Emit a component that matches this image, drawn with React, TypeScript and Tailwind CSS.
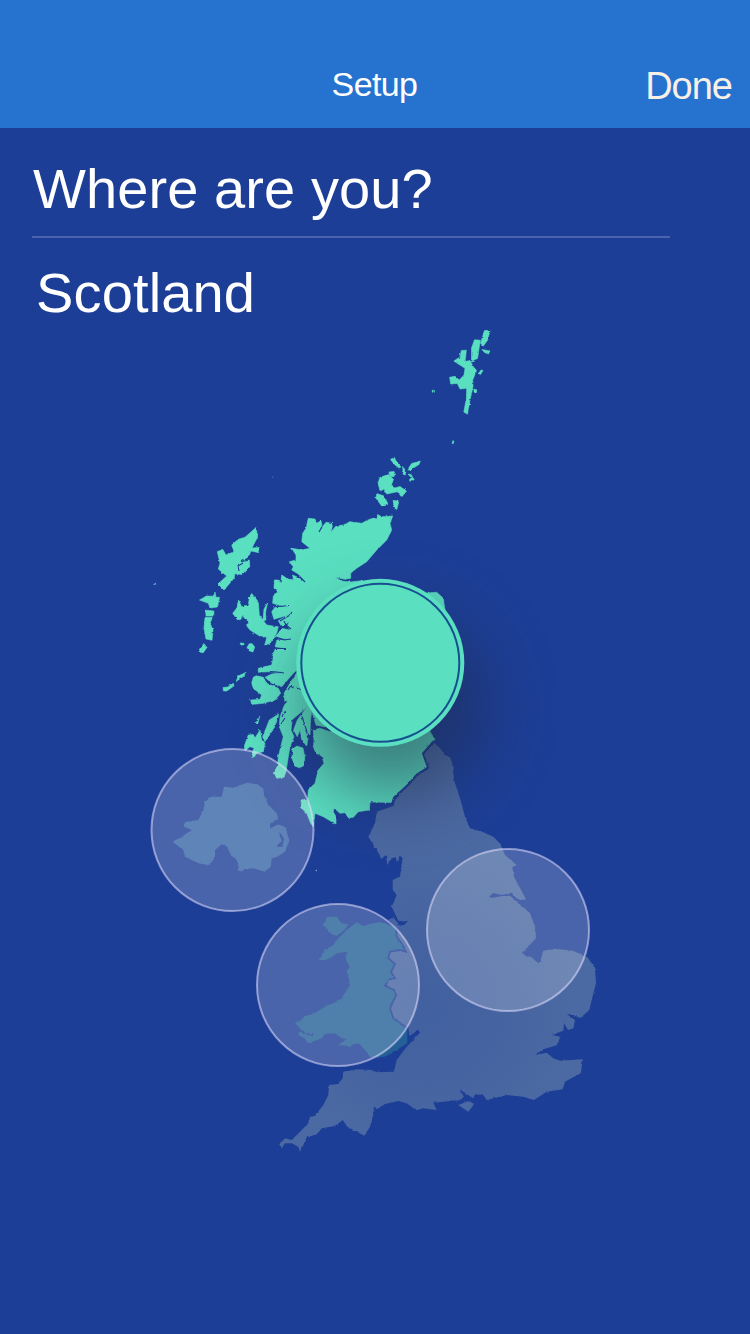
import React from "react";

const mainland =
  "M308.3 518.3L315 519L316.7 523.3L321 520.7L322 525L318.5 531.7L326 522.3L331.7 523.3L332.3 526.7L330.7 532.3L336 526L343.3 525L350 521.7L361.7 523.3L368 520L373.3 518.3L377 519L377.7 514.5L381.7 516.7L392.7 516L390 523.3L391.7 530L386.7 540L376.7 550L366.7 561.7L356.7 568.3L350.7 573.3L350.7 578.3L345 579.3L335 577.3L341.7 581L350 582L361.7 580.7L380 600L430 592.7L436.7 592.3L443.3 598.3L445 610L440 700L430 731.7L435 739.3L422.7 752.7L427.7 766.7L416.7 773.3L408.3 783.3L393.3 796.7L391.7 802.7L370 802.3L369.3 810L358.3 811.7L353.3 817.3L348.3 817.7L345 812.7L340 813.3L334 808.3L333.3 811.7L336 816.7L336 824L330 820.7L323.3 816.7L315 813.3L313.3 826.7L310.7 823.3L306.7 813.3L301.7 808.3L301 800L305 799.3L307.3 803.3L308.3 790L315 783.3L318.3 770L324 763.3L321.7 756L316 753.3L313.3 746.7L314 741L313.3 730L320 728.3L330 731.7L345 720L330 690L300 680L296 670.7L293.3 673.3L281.7 686.7L271.7 683.3L265 677.3L271.7 674L283.3 672.7L268.3 671.7L258.3 672.3L258.3 668.3L271.7 665L273.3 656.7L271.7 658.3L275 649.3L285 648.3L275 646.7L277 640L290 640L275 636.7L278.3 633.3L281.7 628.3L290 630L287.3 626L289.3 621.7L281.7 626.7L278.3 620.7L288.3 615L274 619.3L271.7 611.7L275 607.3L284 606.7L272.7 603.3L273.3 595L278.3 591.7L274 588.3L274.3 580L278.3 580L280.7 583.3L281.7 575L286.7 578.3L293.3 580L292.5 575L296.7 576.7L305 581.7L298.3 574L291.7 570L293.3 566.7L289.3 561.7L296 560L296 555L291.7 548.3L301.7 550L310 548.3L301.7 541.7L302.7 533.3L306 528.3Z";

const argyll =
  "M297.3 672L290 683.3L284 693.3L285 703.3L280 716.7L279.3 726.7L283.3 736.7L278.3 756.7L277.7 765L274.3 773.3L276.7 778.3L284 777.3L286 771.7L288.3 756.7L290 746.7L294 736.7L291 730L292.3 719.6L306.7 707.5L297.3 720L293.6 730L297.3 736.7L300 730L301.7 740L306.7 746L308 738L304.5 729L310 735L310.5 721L311.7 711L316 725L325 727L340 715L340 660Z";

const lochs =
  "M241 561.5L248 560.5M243 563L238 566L239 571M276 606.8L289 605.5M280 621L290 615L292 612M281 628L286 625L291 629M286 625L284 621M276 637L284 640L291 639M276 648.5L286 648.5M292 573L299 576L305 582M293.5 688L290.5 686L288 690M297 688L305 691L314 690.5M282 716L285.5 711M281 724L285 718M283 705L287 701M302 716L307 732M270 671.5L277 672L284 673M322 527L319 532";

const islands = [
  "M292.5 749L297 746L303 748L304.8 757L304.5 765L300 768L294.5 766L292 758Z",
  "M253.5 677L256.7 675.7L263.3 677.3L266.7 683.3L278.3 688.3L280.7 693.3L275 700L263.3 703.3L251.7 704.5L250.7 700L260 699.3L261.7 695L253.3 688.3L251.7 682.7Z",
  "M246 672.3L244 676L236 681.5L238.3 676Z",
  "M223 687.5L228 687L233.3 683.3L234 686L226.7 691L223.5 691Z",
  "M278.8 714L276.7 721.7L271.7 731.7L265 741.7L262.6 736.7L266.7 726.7L269.3 720Z",
  "M260 730L261.7 740L265 743.3L263.3 751.7L256.7 753.3L253.3 758L252 753L254 748L250 746.7L245 750.5L244.3 746L248.3 735L253.3 734.5L255 738Z",
  "M259.8 716L258 723L255 722.5Z",
  "M251.7 593.5L258.3 601.7L259.3 615L266.7 625L278.3 626.7L276.7 633.3L270 643.3L264.7 646L266.7 636.7L261.7 637.3L250 630L246 625L249 623L243.3 615L238.3 621L232.7 613.3L236.7 608.3L238.5 600L241.7 606.7L248.3 605L249.5 597Z",
  "M267.6 603L265.5 612L266 620L262.8 621L264 609Z",
  "M249 644L252 643.5L254.7 647L253 652L249.5 651L247 647.5Z",
  "M240 643L244 643.3L244 645L241 645Z",
  "M256 527.5L257.7 536.7L252 548L259.3 547.5L258 552.5L251 551L249.3 555L240 561.7L249.3 560L249.8 566.7L241.7 574.5L235 573.7L234 578.3L224 590L218 584L226.7 576L218.3 569L220 563.3L217.3 551.7L222.7 549.3L226 555L234 551.7L231.7 545L238.3 539.3L245 537.3Z",
  "M199.5 600L206.7 596L214 596.3L215 592L216 597.3L219.6 597.3L217.3 607L210 608L208.3 603.3Z",
  "M205.7 610.2L214 611L213.7 616L206 616Z",
  "M205 617.3L212.7 617.3L210 623L213 630L212 640.3L206 639L204 628.3Z",
  "M203.8 643.5L207 647.3L203.3 652.7L199 652Z",
  "M153.8 583.3L155.6 583.3L155.6 584.3L154.2 584.3Z",
  "M380 477.3L388.3 474.6L393.5 479.3L391 486L395 488L400 486.5L406.5 491L401.7 497L397.3 491.7L386.7 494L384 489L380 490.5L378 483.3Z",
  "M376.7 493.5L384 496L387.8 503.5L381.7 506L376 498.3Z",
  "M389 472L394 471.5L395.5 474.5L392 477L389.5 475Z",
  "M393 500.5L399 501L396.8 509.5L394.5 508Z",
  "M390.5 459.5L394.3 457.3L396.3 461.7L401 467L399 468L394 464Z",
  "M407.3 470L411.7 463.5L420.3 461L419 464.5L415 467L410 470Z",
  "M402.5 466.5L404.6 470L405.5 475L402 474L403 470Z",
  "M408 474L411 474.5L414.3 480L409.5 480L411 477.5Z",
  "M484.5 330.5L490 330.5L487.7 340L483.3 346L480.5 343.3Z",
  "M482 349.5L489.8 351L488.5 354L484.5 352.5Z",
  "M474.5 339.8L480.3 340.2L477.5 358.5L471.5 361L471.5 348Z",
  "M461.3 350.5L466.4 350.2L465 361.7L470 360.4L473.3 366.7L476.5 370.5L472.7 380L473 386.7L470 400L467.5 414.3L463.8 412L466.4 398.3L466.7 388.3L460 389L457.3 383.5L450.7 384L449.6 377.3L455 376.3L459.3 380L464 375L465 368.3L458.3 364L453.8 361L460 357Z",
  "M478.5 373.5L481 370L483 370.5L480.5 374.5Z",
  "M474 389L477 390L476 393.5L474 392Z",
  "M432.2 390.3L434.4 390.3L434.4 392.3L432.4 392.3Z",
  "M453 440.5L454 441.5L453 444L452 443.5Z",
];

const england =
  "M434 742.7L440 748.3L445 755L450 757.3L452.7 765L454 780L460 798.3L465 816.7L470 828.3L480 830.7L493.3 836.7L500 843.3L505 855L516.7 865L512.3 867.3L514 876.7L526 899.3L520 900L515 896.7L511.7 892.7L501.7 895L493.3 893L489 896.7L493.3 897.7L502 895.9L510 895.7L518.3 903.3L530 913.3L535 926.7L536 938.3L526.7 948.3L522 952.7L526.7 956.7L530 956L538.3 963.3L540.7 960L543.3 950.7L553.3 948.7L573.3 950.7L588.3 958.3L595 968.3L596 983.3L591.7 1000L589.3 1010L580 1018.3L573.3 1015L566.7 1014L575 1020L573.3 1028.3L568 1030L564 1023.3L563.3 1030.7L551.7 1035L560 1036.7L557.7 1045L543.3 1049.3L535 1055L546.7 1052.7L553.3 1058.3L560 1060.7L582.7 1059.3L580.7 1073.3L565 1081.7L562.7 1089.3L546.7 1091.7L534 1100L523.3 1096.7L506.7 1095L486.7 1100L483.3 1095L475 1094.3L473.3 1098.3L459.3 1089.3L464 1096.7L460 1100L433.3 1102.7L436.7 1110L423.3 1108.3L416 1110L406.7 1103.3L398.3 1101L385 1104L376.7 1109.3L374 1106L373.3 1115L370 1126.7L364.3 1135.7L356.7 1131.7L347.3 1126.7L342.7 1120L335 1126L321.7 1128.3L316.7 1134.3L306.7 1137.3L303.3 1145L300 1151.7L298.3 1146.7L291.7 1143.3L285 1143.3L281.7 1148.3L279 1145L285 1138.3L291.7 1140L301.7 1130L308.3 1123.3L310 1116.7L315 1116L323.3 1105L328.3 1095L329 1085L338.3 1084L342.7 1078.3L343.3 1071.7L356.7 1069.3L371.7 1070L376.7 1072.3L394 1071.7L396.7 1060L406.7 1046.7L420 1032.7L418 1030L409.5 1036L408.3 1027L406 1026.7L393.3 1018.3L390 1008.3L396 995L394 990L385 985.7L390 979L395 978.3L391 972L395 964L388.3 958.3L390 951.7L400 950L406 951.7L401.7 943.3L396.7 936.7L396 928.3L388.3 920L393.3 917.3L400 925.7L404 925L408.3 920.7L404 921.5L398.3 920.7L391.7 906.7L396.7 895L392.7 890L392.7 880L400 876.7L402.7 856.7L399.3 856L398.3 861.7L394.3 857L391.7 858.3L387.3 865L386 855L381.7 858.3L376.7 850L368.3 836.7L375 823.3L376.7 811.7L393.3 806L395 800L410 783.3L416.7 776L428.3 769L423.3 754Z";

const wight = "M458.3 1105L468.3 1101L474.3 1104L468.3 1111.7Z";

const walesBorder =
  "M396 928.3L396.7 936.7L401.7 943.3L406 951.7L400 950L390 951.7L388.3 958.3L395 964L391 972L395 978.3L390 979L385 985.7L394 990L396 995L390 1008.3L393.3 1018.3L407.3 1028";

const wales =
  walesBorder +
  "L407.3 1043.3L396.7 1050L385 1056.7L370 1057.3L365 1050L358.3 1042.7L350 1046L338.3 1045L346.7 1039L341.7 1038.3L335 1033.3L325 1034L321.7 1038.3L308.3 1043.3L305 1038.7L296.7 1034L300 1031.7L313 1036.5L313.5 1031L312 1035L301 1030L298 1026L295 1023.3L300 1020.7L305 1016L313.3 1014L325 1006.7L340 1000L348.3 988.3L350 978.3L346.7 971.7L350 966.7L346 960L346.7 951.7L336.7 953.3L328.3 959.3L318.3 960.7L325 950L333.3 945L338.3 938.3L346.7 930L356.7 922.3L363.3 926L373.3 923.3L381.7 921.7Z";

const anglesey =
  "M327.3 916.7L336.7 916.7L341.7 923.3L348.3 924.3L345 929.3L336.7 936L330 933.3L326.7 928.3L322.7 925Z";

const northernIreland =
  "M224 786.7L233.3 787.7L246.7 782.7L256.7 784.3L263.3 788.3L264 795L268.3 805L276.7 813.3L278 819L273 821.3L270 824L270 828.5L278.3 824.3L285 826.7L289.3 840L285 851.7L277.3 856.7L271.7 858.3L270.7 866.7L265 871.7L253.3 868.3L239.3 871L236.7 860L230.7 855L227.3 846.7L221.7 844.3L215 850L215 858.3L208.3 865L198.3 863.3L185 856.7L183.3 850L172.7 841.7L181.7 836.7L191.7 830L184 826.7L185 822.3L198.3 820L203.3 810L205 801.7L211.7 796.7L221.7 796.7ZM279.3 831.7L280.7 841L277.3 846.7L282.7 846.7L284 838.3Z";

const regions = [
  { name: "Northern Ireland", cx: 232.5, cy: 830 },
  { name: "Wales", cx: 338, cy: 985 },
  { name: "England", cx: 508, cy: 930 },
];

function RegionMap() {
  return (
    <svg viewBox="0 320 750 1014" className="block h-[1014px] w-full" role="img">
      <defs>
        <filter id="coast" x="0" y="320" width="750" height="1014" filterUnits="userSpaceOnUse" colorInterpolationFilters="sRGB">
          <feTurbulence type="fractalNoise" baseFrequency="0.25" numOctaves="2" seed="4" />
          <feDisplacementMap in="SourceGraphic" scale="2.4" xChannelSelector="R" yChannelSelector="G" />
        </filter>
        <filter id="soft" x="-100%" y="-100%" width="300%" height="300%" colorInterpolationFilters="sRGB">
          <feGaussianBlur stdDeviation="34" />
        </filter>
        <radialGradient id="shade" gradientUnits="userSpaceOnUse" cx="425" cy="1005" r="150">
          <stop offset="0" stopColor="#1d3e96" stopOpacity="0.2" />
          <stop offset="0.45" stopColor="#1d3e96" stopOpacity="0.14" />
          <stop offset="1" stopColor="#1d3e96" stopOpacity="0" />
        </radialGradient>
      </defs>
      <g filter="url(#coast)">
        <path d={england} fill="#4b69a2" />
        <path d={england} fill="url(#shade)" />
        <path d={wight} fill="#4b69a2" />
        <path d={wales} fill="#246097" />
        <path d={anglesey} fill="#246097" />
        <path d={walesBorder} fill="none" stroke="#1d3e96" strokeWidth="1.8" />
        <path d={northernIreland} fill="#3866a6" fillRule="evenodd" />
        <g fill="#5adfc1" stroke="#5adfc1" strokeWidth="0.6" strokeLinejoin="round">
          <path d={mainland} />
          <path d={argyll} />
          <path d={islands.join("")} />
        </g>
        <path d="M434 741L423 753.5L428 767.5L416.7 775L409 784L394 798L392 804L371 803.5" fill="none" stroke="#1d3e96" strokeWidth="2" />
        <path d={lochs} fill="none" stroke="#1d3e96" strokeWidth="1.1" />
      </g>
      <circle cx="272.8" cy="477.2" r="0.6" fill="#3c8fac" />
      <circle cx="392" cy="706" r="92" fill="#1f2a44" fillOpacity="0.53" filter="url(#soft)" />
      {regions.map((r) => (
        <circle key={r.name} cx={r.cx} cy={r.cy} r="81" fill="#fff" fillOpacity="0.2" stroke="#e4e0ff" strokeOpacity="0.55" strokeWidth="2" />
      ))}
      <circle cx="316.3" cy="870.5" r="0.8" fill="#8da3c8" />
      <circle cx="380.3" cy="662.8" r="84" fill="#5adfc1" />
      <circle cx="380.3" cy="662.8" r="79" fill="none" stroke="#17508f" strokeWidth="2" />
    </svg>
  );
}

export default function App() {
  return (
    <div className="flex h-[1334px] w-[750px] flex-col overflow-hidden bg-[#1d3e96] font-['Liberation_Sans',Arial,sans-serif] text-white">
      <header className="grid h-32 shrink-0 grid-cols-3 items-center bg-[#2673cf] px-[18px] pt-[42px]">
        <span />
        <h1 className="pr-px pb-[3px] text-center text-[34px] leading-none tracking-[-0.6px]">Setup</h1>
        <button className="pt-px text-right text-[38px] leading-none tracking-[-1px] text-[#f8f0e6]">Done</button>
      </header>
      <main className="flex flex-1 flex-col">
        <section className="flex h-48 shrink-0 flex-col pl-8">
          <h2 className="flex h-[108px] w-[638px] shrink-0 items-center whitespace-nowrap pt-[14px] pl-px text-[56px] leading-none tracking-[0.1px]">Where are you?</h2>
          <div className="h-0.5 w-[638px] shrink-0 bg-[#4a63ad]" />
          <p className="pt-[27px] pl-1 text-[56px] leading-none tracking-[0.15px]">Scotland</p>
        </section>
        <RegionMap />
      </main>
    </div>
  );
}
